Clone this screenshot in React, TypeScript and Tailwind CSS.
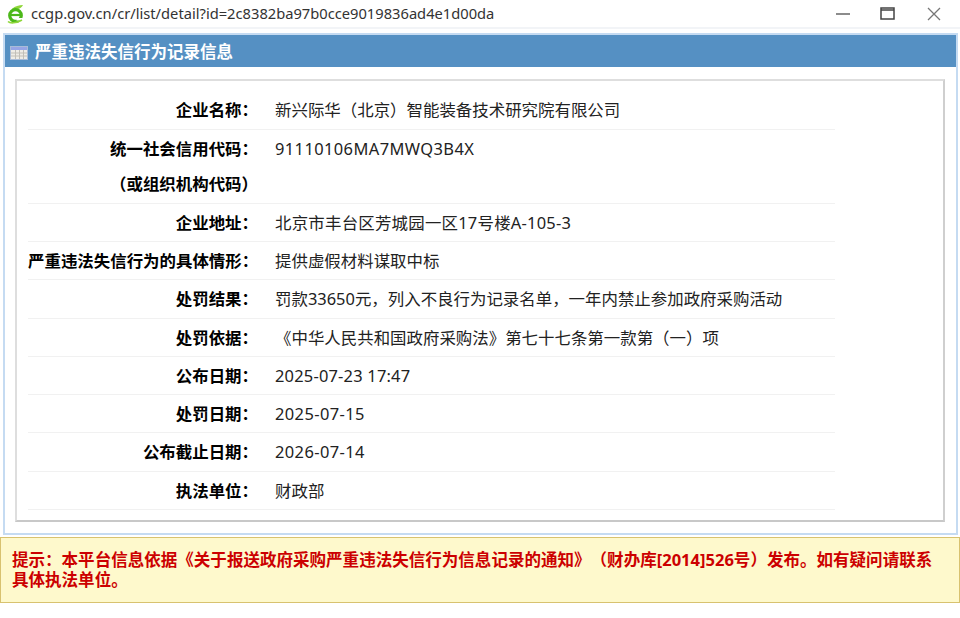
const rows: { label: string; sub?: string; value: string; tracking?: string }[] = [
  { label: '企业名称：', value: '新兴际华（北京）智能装备技术研究院有限公司' },
  { label: '统一社会信用代码：', sub: '（或组织机构代码）', value: '91110106MA7MWQ3B4X', tracking: 'tracking-[0.4px]' },
  { label: '企业地址：', value: '北京市丰台区芳城园一区17号楼A-105-3', tracking: 'tracking-[0.22px]' },
  { label: '严重违法失信行为的具体情形：', value: '提供虚假材料谋取中标' },
  { label: '处罚结果：', value: '罚款33650元，列入不良行为记录名单，一年内禁止参加政府采购活动' },
  { label: '处罚依据：', value: '《中华人民共和国政府采购法》第七十七条第一款第（一）项' },
  { label: '公布日期：', value: '2025-07-23 17:47', tracking: 'tracking-[0.2px]' },
  { label: '处罚日期：', value: '2025-07-15', tracking: 'tracking-[0.4px]' },
  { label: '公布截止日期：', value: '2026-07-14', tracking: 'tracking-[0.4px]' },
  { label: '执法单位：', value: '财政部' },
];

function IeIcon() {
  return (
    <svg width="18" height="20" viewBox="0 0 18 20" className="ml-[7px] mt-[1px]">
      <path d="M5 5C8 2 12 1 16 1C15 3 13 5 10 5Z" fill="#8fd63a" />
      <circle cx="8.5" cy="11.5" r="5.8" fill="none" stroke="#4cb81a" strokeWidth="3.2" />
      <path d="M4 11H14" stroke="#4cb81a" strokeWidth="2.2" />
      <path d="M9.5 14H17V16.5H9.5Z" fill="#ffffff" />
      <path d="M1 17.5C3 19.5 9 19.5 15 16" fill="none" stroke="#8fd63a" strokeWidth="1.6" />
    </svg>
  );
}

function TableIcon() {
  return (
    <svg width="18" height="14" viewBox="0 0 18 14" className="shrink-0">
      <rect x="0.5" y="0.5" width="17" height="13" fill="#efece6" stroke="#a9bcd8" />
      <rect x="1" y="1" width="16" height="3" fill="#97a6e6" />
      <path d="M1 7H17M1 10H17M5.5 4V13M9.5 4V13M13.5 4V13" stroke="#c2bfb8" strokeWidth="1" />
    </svg>
  );
}

export default function App() {
  return (
    <div className="w-[960px] h-[618px] bg-white overflow-hidden font-['Noto_Sans','Noto_Sans_CJK_SC',sans-serif] [text-spacing-trim:space-all]">
      <div className="h-[29px] flex items-center border-b-2 border-[#f2f4f7]">
        <IeIcon />
        <span className="ml-[6px] text-[14.7px] text-[#333] leading-none">
          ccgp.gov.cn/cr/list/detail?id=2c8382ba97b0cce9019836ad4e1d00da
        </span>
        <div className="ml-auto flex items-center">
          <svg width="16" height="16" viewBox="0 0 16 16" className="mr-[29px]">
            <path d="M1 8H15" stroke="#666" strokeWidth="1.5" />
          </svg>
          <svg width="16" height="14" viewBox="0 0 16 14" className="mr-[30px]">
            <rect x="1" y="1" width="13" height="11" fill="none" stroke="#444" strokeWidth="1.5" />
            <path d="M1 3H14" stroke="#444" strokeWidth="1.5" />
          </svg>
          <svg width="16" height="16" viewBox="0 0 16 16" className="mr-[18px]">
            <path d="M2 2L14 14M14 2L2 14" stroke="#777" strokeWidth="1.3" />
          </svg>
        </div>
      </div>

      <div className="ml-[3px] mr-[2px] mt-[4px] h-[502px] border-2 border-[#c5dbf2] bg-white">
        <div className="h-[32px] flex items-center gap-[6px] pl-[5px] pt-[3px] bg-[#5590c3] text-white">
          <TableIcon />
          <h1 className="ml-[1px] text-[16.5px] font-bold leading-none">严重违法失信行为记录信息</h1>
        </div>
        <div className="ml-[10px] mr-[11px] mt-[12px] h-[443px] border-2 border-[#dedede] border-r-[#cfcfcf] border-b-[#c8c8c8] bg-white">
          <div className="ml-[11px] mt-[10.4px] w-[807px] text-[16.45px] text-[#222]">
            {rows.map((row) => (
              <div key={row.label} className="flex border-b border-[#f1f1f1]">
                <div className="w-[230px] shrink-0 text-right font-bold text-black whitespace-nowrap">
                  <div className="h-[37.25px] leading-[37.5px]">{row.label}</div>
                  {row.sub && <div className="h-[36px] leading-[33px]">{row.sub}</div>}
                </div>
                <div className={`pl-[17px] whitespace-nowrap h-[37.25px] leading-[37.5px] ${row.tracking ?? ''}`}>{row.value}</div>
              </div>
            ))}
          </div>
        </div>
      </div>

      <div className="mt-[2px] h-[66px] border border-[#d8c26f] bg-[#fef9cc] pl-[11px] pr-[20px] pt-[12px] text-[16.55px] font-bold leading-[20px] text-[#cc0000]">
        提示：本平台信息依据《关于报送政府采购严重违法失信行为信息记录的通知》（财办库[2014]526号）发布。如有疑问请联系具体执法单位。
      </div>
    </div>
  );
}
